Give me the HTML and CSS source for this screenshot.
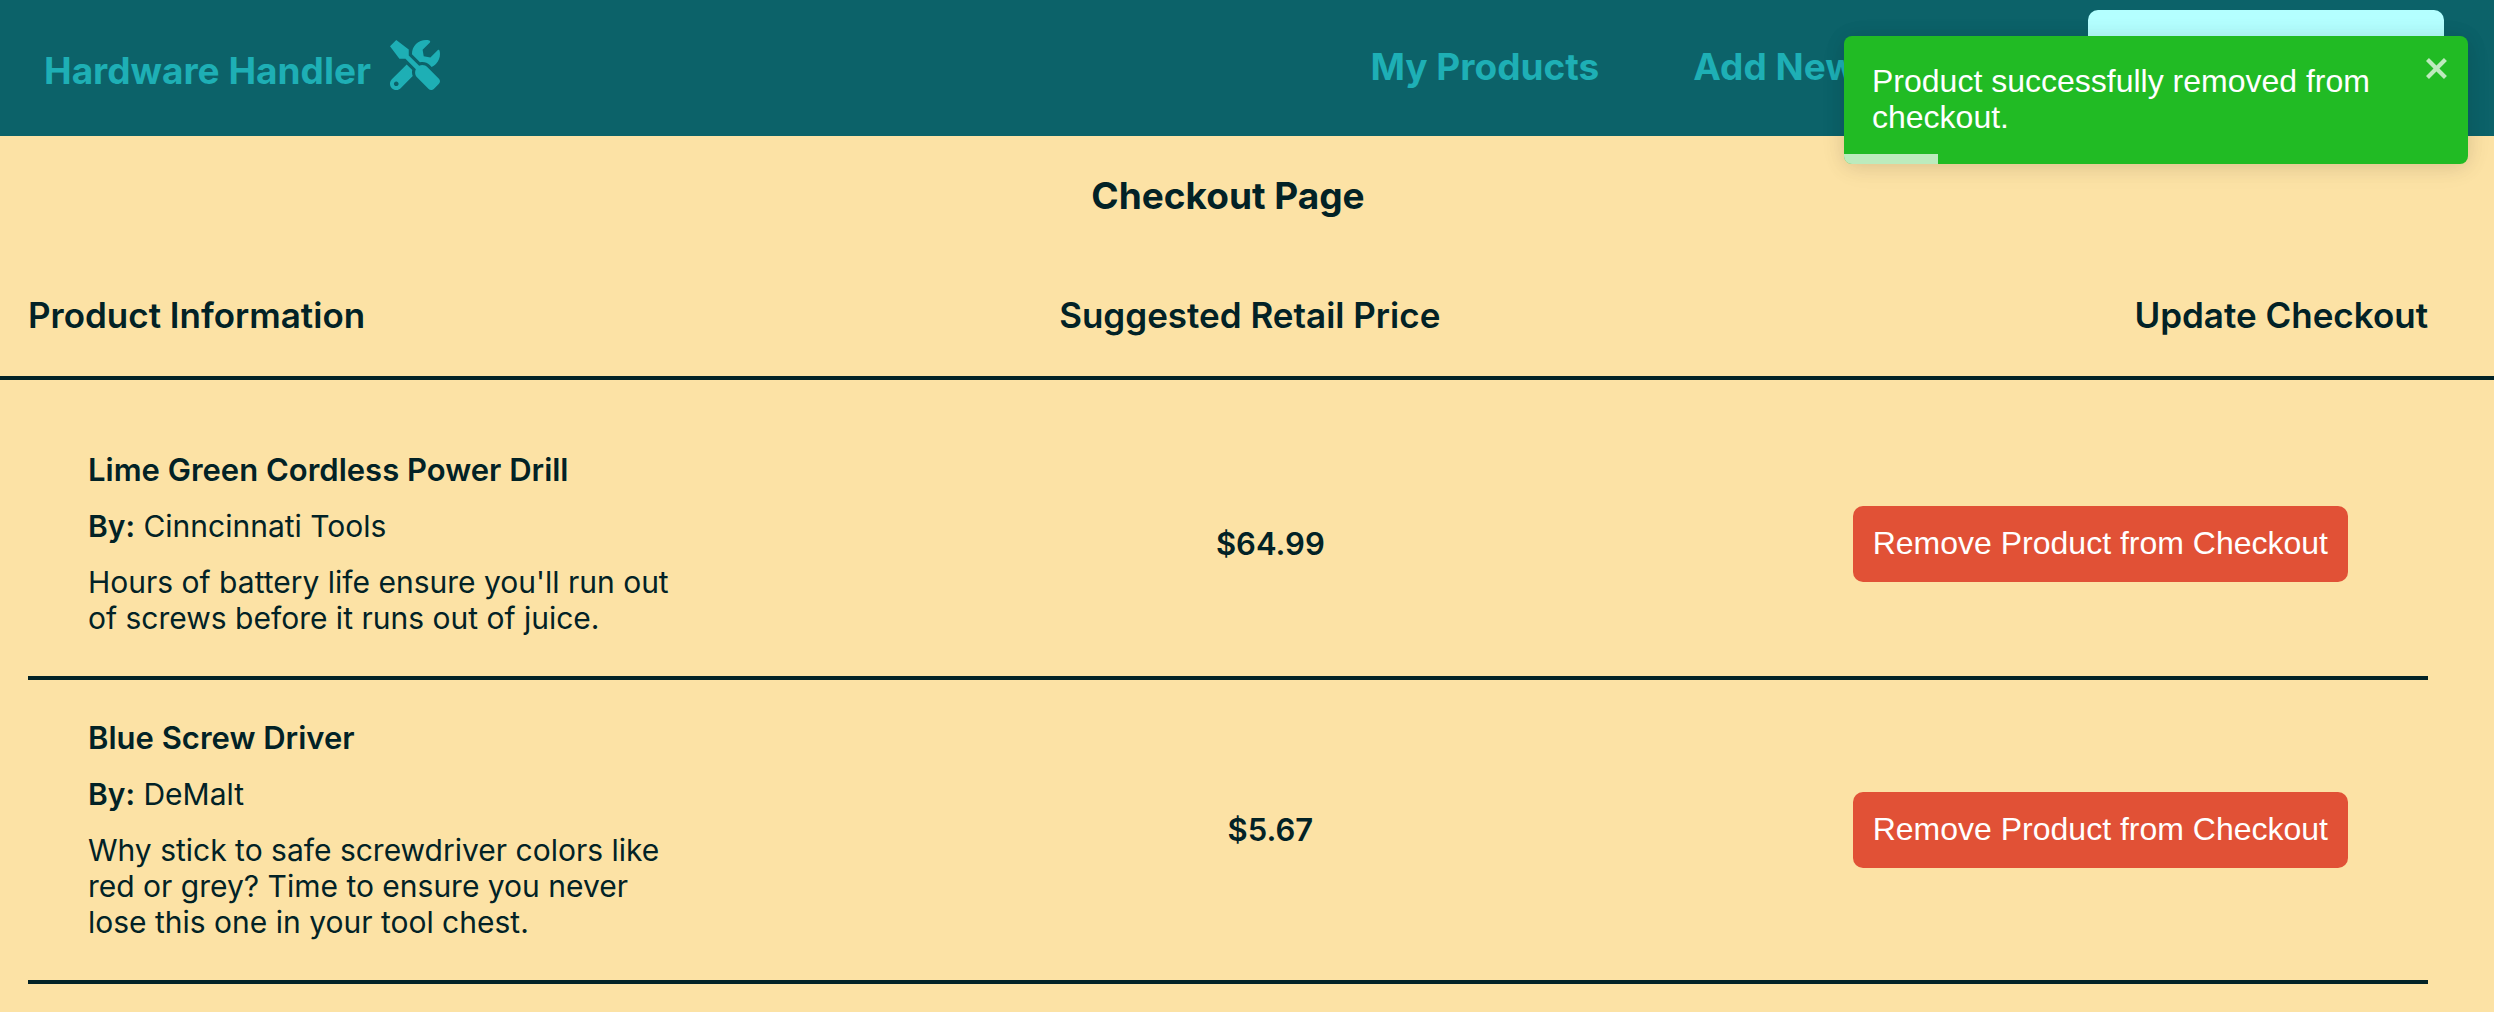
FILE: index.html
```html
<!DOCTYPE html>
<html lang="en">
<head>
  <meta charset="utf-8">
  <title>Hardware Handler - Checkout</title>
  <link rel="stylesheet" href="styles.css">
</head>
<body>
  <header class="navbar">
    <a class="brand" href="#">
      <span>Hardware Handler</span>
      <svg class="brand-icon" viewBox="0 0 512 512" aria-hidden="true"><path fill="currentColor" d="M501.1 395.7L384 278.6c-23.1-23.1-57.6-27.6-85.4-13.9L192 158.1V96L64 0 0 64l96 128h62.1l106.6 106.6c-13.6 27.8-9.2 62.3 13.9 85.4l117.1 117.1c14.6 14.6 38.2 14.6 52.7 0l52.7-52.7c14.5-14.6 14.5-38.2 0-52.7zM331.7 225c28.3 0 54.9 11 74.9 31l19.4 19.4c15.8-6.9 30.8-16.5 43.8-29.5 37.1-37.1 49.7-89.3 37.9-136.7-2.2-9-13.5-12.1-20.1-5.5l-74.4 74.4-67.9-11.3L334 98.9l74.4-74.4c6.6-6.6 3.4-17.9-5.7-20.2-47.4-11.7-99.6.9-136.6 37.9-28.5 28.5-41.9 66.1-41.2 103.6l82.1 82.1c8.1-1.9 16.5-2.9 24.7-2.9zm-103.9 82l-56.7-56.7L18.7 402.8c-25 25-25 65.5 0 90.5s65.5 25 90.5 0l123.6-123.6c-7.6-19.9-9.9-41.6-5-62.7zM64 472c-13.2 0-24-10.8-24-24 0-13.3 10.7-24 24-24s24 10.7 24 24c0 13.2-10.7 24-24 24z"/></svg>
    </a>
    <nav class="nav">
      <div class="nav-links">
        <a class="nav-link" href="#">My Products</a>
        <a class="nav-link" href="#">Add New Product</a>
      </div>
      <button class="checkout-button" type="button" aria-label="Checkout"></button>
    </nav>
  </header>

  <main class="checkout">
    <h1 class="page-title">Checkout Page</h1>
    <table class="products">
      <thead class="products-head">
        <tr class="head-row">
          <th scope="col">Product Information</th>
          <th scope="col">Suggested Retail Price</th>
          <th scope="col">Update Checkout</th>
        </tr>
      </thead>
      <tbody class="products-body">
        <tr class="product">
          <td class="product-info">
            <h2 class="product-name">Lime Green Cordless Power Drill</h2>
            <p><strong>By:</strong> Cinncinnati Tools</p>
            <p class="product-description">Hours of battery life ensure you'll run out of screws before it runs out of juice.</p>
          </td>
          <td class="product-price">$64.99</td>
          <td><button class="remove-button" type="button">Remove Product from Checkout</button></td>
        </tr>
        <tr class="product">
          <td class="product-info">
            <h2 class="product-name">Blue Screw Driver</h2>
            <p><strong>By:</strong> DeMalt</p>
            <p class="product-description">Why stick to safe screwdriver colors like red or grey? Time to ensure you never lose this one in your tool chest.</p>
          </td>
          <td class="product-price">$5.67</td>
          <td><button class="remove-button" type="button">Remove Product from Checkout</button></td>
        </tr>
      </tbody>
    </table>
  </main>

  <div class="toast" role="alert">
    <div class="toast-body">Product successfully removed from checkout.</div>
    <button class="toast-close" type="button" aria-label="close">
      <svg viewBox="0 0 14 16" width="28" height="32" aria-hidden="true"><path fill="currentColor" d="M7.71 8.23l3.75 3.75-1.48 1.48-3.75-3.75-3.75 3.75L1 11.98l3.75-3.75L1 4.48 2.48 3l3.75 3.75L9.98 3l1.48 1.48-3.75 3.75z"/></svg>
    </button>
    <div class="toast-progress"></div>
  </div>
</body>
</html>
```
FILE: styles.css
```css
* {
  box-sizing: border-box;
}

body {
  margin: 0;
  background: #fce2a5;
  color: #022226;
  font-family: Inter, "Liberation Sans", sans-serif;
  font-size: 30px;
  line-height: 36px;
}

h1,
h2,
p {
  margin: 0;
}

button {
  border: 0;
  font-family: "Liberation Sans", Arial, sans-serif;
  font-size: 32px;
  line-height: 36px;
  cursor: pointer;
}

/* Top bar */

.navbar {
  display: flex;
  justify-content: space-between;
  align-items: center;
  min-height: 136px;
  padding: 10px 50px 10px 44px;
  background: #0c6269;
}

.brand,
.nav-link {
  color: #1eafb5;
  font-size: 37px;
  font-weight: 700;
  line-height: 50px;
  text-decoration: none;
}

.brand {
  display: flex;
  align-items: flex-end;
  gap: 19px;
}

.brand-icon {
  width: 50px;
  height: 50px;
  margin-bottom: 6px;
}

.nav {
  display: flex;
  align-items: center;
  gap: 80px;
}

.nav-links {
  display: flex;
  gap: 94px;
  padding-bottom: 2px;
}

.checkout-button {
  width: 356px;
  min-height: 116px;
  border-radius: 10px;
  background: #b4ffff;
}

/* Checkout list */

.checkout {
  padding: 38px 0 28px;
}

.page-title {
  margin: 0 66px 0 28px;
  font-size: 37px;
  line-height: 44px;
  text-align: center;
}

.products,
.products-head,
.products-body {
  display: block;
}

.products-head {
  padding: 75px 66px 39px 28px;
  border-bottom: 4px solid #022226;
}

.head-row {
  display: flex;
  justify-content: space-between;
}

.head-row th {
  padding: 0;
  font-size: 35px;
  font-weight: 600;
  line-height: 44px;
}

.products-body {
  padding: 32px 66px 0 28px;
}

.product {
  display: flex;
  justify-content: space-between;
  align-items: center;
  padding: 40px 80px 40px 60px;
  border-bottom: 4px solid #022226;
}

.product td {
  padding: 0;
}

.product-info {
  display: flex;
  flex-direction: column;
  gap: 20px;
  width: 600px;
}

.product-name,
.product-price {
  font-size: 31px;
  font-weight: 600;
}

.product-info strong {
  font-weight: 600;
}

.remove-button {
  padding: 19px 20px 21px;
  border-radius: 10px;
  background: #e15136;
  color: #fff;
}

/* Notification */

.toast {
  position: absolute;
  top: 36px;
  right: 26px;
  display: flex;
  align-items: flex-start;
  width: 624px;
  min-height: 128px;
  padding: 16px;
  overflow: hidden;
  border-radius: 8px;
  background: #21bb24;
  box-shadow: 0 2px 20px rgba(0, 0, 0, 0.1), 0 4px 30px rgba(0, 0, 0, 0.05);
  color: #fff;
  font-family: "Liberation Sans", Arial, sans-serif;
  font-size: 32px;
}

.toast-body {
  flex: 1;
  padding: 11px 12px 13px;
}

.toast-close {
  display: flex;
  padding: 0;
  background: transparent;
  color: #fff;
  opacity: 0.7;
}

.toast-progress {
  position: absolute;
  bottom: 0;
  left: 0;
  width: 15%;
  height: 10px;
  background: rgba(255, 255, 255, 0.7);
}
```
